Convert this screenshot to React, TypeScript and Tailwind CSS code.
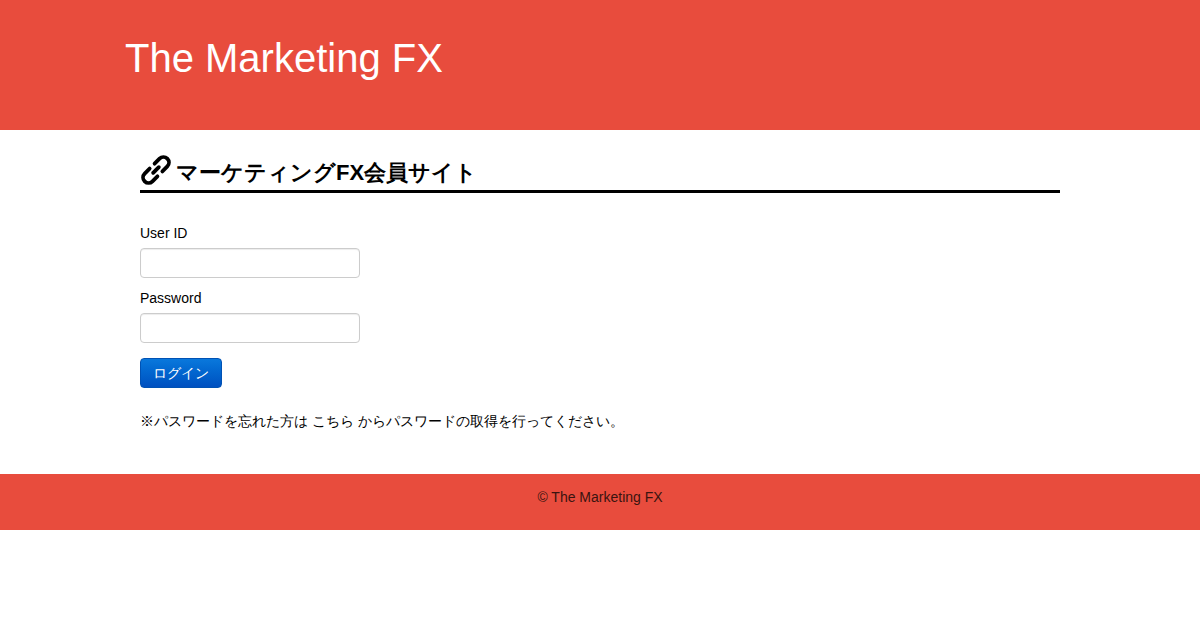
const FONT = "font-['Liberation_Sans',sans-serif]"

function Field({ label, type }: { label: string; type: string }) {
  return (
    <div>
      <label className="block h-[20px] mb-[5px] text-[14px] leading-[20px] text-black">{label}</label>
      <input
        type={type}
        className="block w-[220px] h-[30px] mb-[10px] bg-white border border-[#cccccc] rounded-[4px] shadow-[inset_0_1px_1px_rgba(0,0,0,0.075)]"
      />
    </div>
  )
}

function LinkIcon() {
  return (
    <svg width="32" height="32" viewBox="-16 -16 32 32" fill="none" stroke="black" strokeWidth="3.8" strokeLinecap="round" className="mb-[4px] mr-[4px]">
      <g transform="rotate(-45)">
        <path d="M3.5 -5.5H10.5A5.5 5.5 0 0 1 10.5 5.5H3.5" />
        <path d="M-3.5 5.5H-10.5A5.5 5.5 0 0 1 -10.5 -5.5H-3.5" />
        <path d="M-4 0H4" />
      </g>
    </svg>
  )
}

export default function App() {
  return (
    <div className={`${FONT} bg-white h-[630px]`}>
      <header className="h-[130px] bg-[#e84c3d] pl-[125px] pt-[33px]">
        <h1 className="text-[40px] leading-[50px] text-white">The Marketing FX</h1>
      </header>

      <main className="w-[920px] mx-auto h-[344px] pt-[24px]">
        <h2 className="flex items-end h-[39px] border-b-[3px] border-black text-[22px] leading-[30px] font-bold text-black">
          <LinkIcon />
          <span className="mb-[2px]">マーケティングFX会員サイト</span>
        </h2>

        <form className="mt-[30px]">
          <Field label="User ID" type="text" />
          <Field label="Password" type="password" />
          <button
            type="button"
            className="block mt-[15px] w-[82px] h-[30px] rounded-[4px] border border-[#0052b4] bg-gradient-to-b from-[#0a78dc] to-[#0050c0] text-[14px] leading-[20px] text-white"
          >
            ログイン
          </button>
        </form>

        <p className="mt-[23px] text-[14px] leading-[20px] text-black">
          ※パスワードを忘れた方は こちら からパスワードの取得を行ってください。
        </p>
      </main>

      <footer className="h-[56px] bg-[#e84c3d] pt-[13px] text-center text-[14px] leading-[20px] text-[#3a1410]">
        © The Marketing FX
      </footer>
    </div>
  )
}
